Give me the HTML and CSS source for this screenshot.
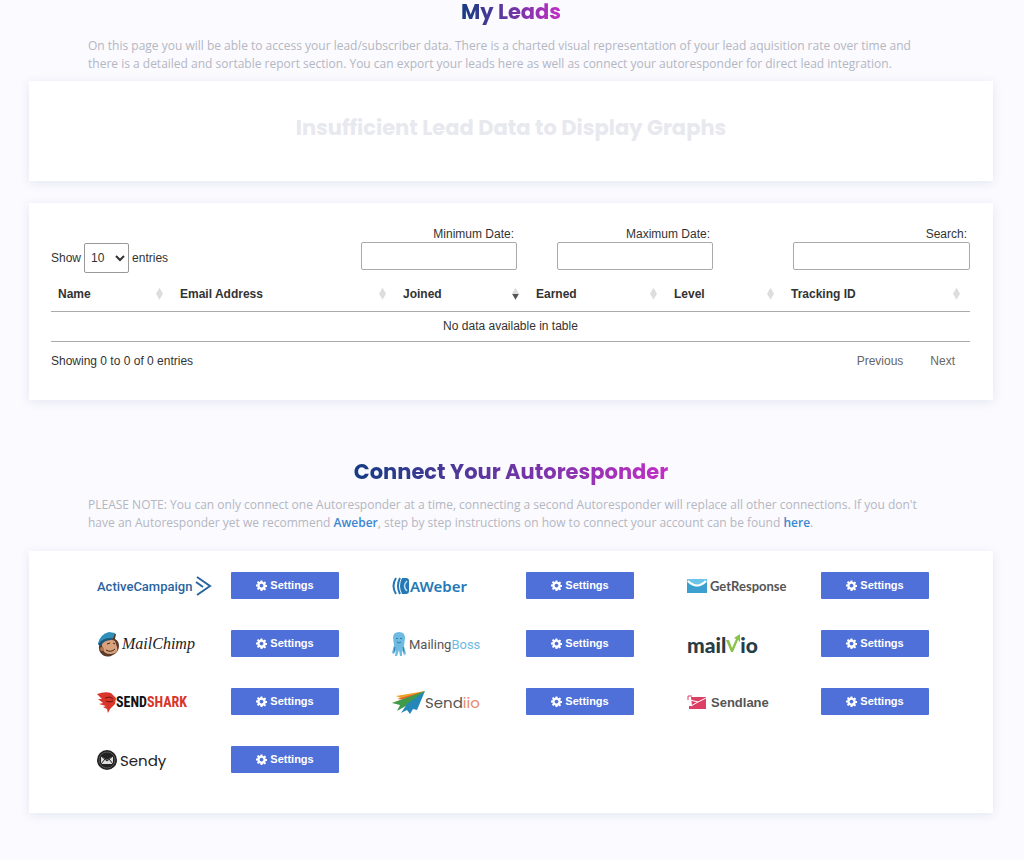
FILE: index.html
```html
<!DOCTYPE html>
<html lang="en">
<head>
    <meta charset="UTF-8">
    <title>My Leads</title>
    <link rel="stylesheet" href="styles.css">
</head>
<body>
<svg class="sprite" aria-hidden="true">
    <symbol id="gear" viewBox="0 0 24 24">
        <path fill-rule="evenodd" d="M10 1h4l.6 3.2 2 .9 2.7-1.900 2.800 2.800-1.900 2.700.900 2L24 11v4l-3 .3-.9 2 1.9 2.7-2.8 2.8-2.7-1.9-2 .9L14 24h-4l-.5-3.2-2-.9-2.7 1.9L2 19l1.9-2.7-.9-2L0 14v-4l3-.3.9-2L2 5l2.8-2.8 2.7 1.9 2-.9zM12 8a4.2 4.2 0 1 0 .01 0z"/>
    </symbol>
</svg>
<main class="page">
    <section class="intro">
        <h1 class="title"><span class="gradient">My Leads</span></h1>
        <p class="text">On this page you will be able to access your lead/subscriber data. There is a charted visual representation of your lead aquisition rate over time and there is a detailed and sortable report section. You can export your leads here as well as connect your autoresponder for direct lead integration.</p>
    </section>

    <section class="card graph">
        <h2 class="title muted">Insufficient Lead Data to Display Graphs</h2>
    </section>

    <section class="card report">
        <div class="controls">
            <div class="length">
                <label for="length">Show</label>
                <select id="length">
                    <option>10</option>
                    <option>25</option>
                    <option>50</option>
                    <option>100</option>
                </select>
                <span>entries</span>
            </div>
            <div class="field">
                <label for="min">Minimum Date:</label>
                <input type="text" id="min">
            </div>
            <div class="field">
                <label for="max">Maximum Date:</label>
                <input type="text" id="max">
            </div>
            <div class="field search">
                <label for="search">Search:</label>
                <input type="search" id="search">
            </div>
        </div>
        <table class="leads">
            <colgroup>
                <col class="c-name"><col class="c-email"><col class="c-joined">
                <col class="c-earned"><col class="c-level"><col>
            </colgroup>
            <thead>
                <tr>
                    <th><div class="sort">Name</div></th>
                    <th><div class="sort">Email Address</div></th>
                    <th aria-sort="descending"><div class="sort desc">Joined</div></th>
                    <th><div class="sort">Earned</div></th>
                    <th><div class="sort">Level</div></th>
                    <th><div class="sort">Tracking ID</div></th>
                </tr>
            </thead>
            <tbody>
                <tr><td colspan="6">No data available in table</td></tr>
            </tbody>
        </table>
        <div class="table-foot">
            <span>Showing 0 to 0 of 0 entries</span>
            <nav class="pager">
                <a href="#">Previous</a>
                <a href="#">Next</a>
            </nav>
        </div>
    </section>

    <section class="intro connect">
        <h2 class="title"><span class="gradient">Connect Your Autoresponder</span></h2>
        <p class="text">PLEASE NOTE: You can only connect one Autoresponder at a time, connecting a second Autoresponder will replace all other connections. If you don't have an Autoresponder yet we recommend <a href="#">Aweber</a>, step by step instructions on how to connect your account can be found <a href="#">here</a>.</p>
    </section>

    <section class="card services">
        <div class="service">
            <div class="logo activecampaign">
                <span>ActiveCampaign</span>
                <svg width="17" height="20" viewBox="0 0 17 20" fill="none" stroke="#2a64a0" stroke-width="2"><path d="M2 1l13 9L2 19M1 6l7 5"/></svg>
            </div>
            <button class="btn"><svg class="gear"><use href="#gear"/></svg>Settings</button>
        </div>
        <div class="service">
            <div class="logo aweber">
                <svg width="17" height="18" viewBox="0 0 17 18"><path fill="#2378b5" d="M10 1h4q3 0 3 3v10q0 3-3 3h-4Q6 9 10 1z"/><path fill="none" stroke="#2378b5" stroke-width="2" d="M4 1q-5 8 0 16M8 1Q4 9 8 17"/><path fill="none" stroke="#bfe0f2" stroke-width="1.500" d="M15 4q-5 5 0 10"/></svg>
                <span>AWeber</span>
            </div>
            <button class="btn"><svg class="gear"><use href="#gear"/></svg>Settings</button>
        </div>
        <div class="service">
            <div class="logo getresponse">
                <svg width="20" height="14" viewBox="0 0 20 14"><path fill="#3ba0cf" d="M0 0h20v14H0z"/><path fill="#6cc4e6" d="M0 0h20v3q-10 9-20 0z"/><path fill="none" stroke="#fff" stroke-width="2" d="M1 2q9 9 18 0"/></svg>
                <span>GetResponse</span>
            </div>
            <button class="btn"><svg class="gear"><use href="#gear"/></svg>Settings</button>
        </div>
        <div class="service">
            <div class="logo mailchimp">
                <svg width="23" height="25" viewBox="0 0 23 25"><path fill="#5b3a2b" d="M5 6Q0 14 3 20q4 6 11 4 8-3 8-10 0-5-4-7l1-5-4-1z"/><path fill="#d9a27d" d="M8 9q5-3 10 0 1 3 2 6 2 6-6 7-8 0-8-6-3-4 2-7z"/><path fill="#2f8fb8" d="M1 12Q3 2 12 0l6 1q-1 4-3 6-8 0-12 7z"/><path fill="#1e5578" d="M1 12q6-7 14-6l-1 2Q7 8 3 14z"/><path fill="none" stroke="#3b241b" d="M10 12l3-1M16 11l2 1M9 18q5 3 9-1"/><circle fill="#b57650" cx="5" cy="17" r="2"/></svg>
                <span>MailChimp</span>
            </div>
            <button class="btn"><svg class="gear"><use href="#gear"/></svg>Settings</button>
        </div>
        <div class="service">
            <div class="logo mailingboss">
                <svg width="14" height="24" viewBox="0 0 14 24"><path fill="#6dbbe0" d="M1 6q0-6 6-6t6 6l-1 8 2 8-2 1-2-5v6H8l-1-6-2 6H3l1-6-2 4-2-1 2-8z"/><path fill="none" stroke="#2f7da8" d="M4 7q1-2 2 0M8 7q1-2 2 0M5 10q2 2 4 0M3 15l-1 5M11 15l1 5"/></svg>
                <span>Mailing<span class="blue">Boss</span></span>
            </div>
            <button class="btn"><svg class="gear"><use href="#gear"/></svg>Settings</button>
        </div>
        <div class="service">
            <div class="logo mailvio">
                <span>mail</span>
                <svg width="14" height="20" viewBox="0 0 14 20"><path fill="#8bc34a" d="M0 6h3l3 8 4-9-2-1 6-4v8l-2-2-5 12H5z"/></svg>
                <span>io</span>
            </div>
            <button class="btn"><svg class="gear"><use href="#gear"/></svg>Settings</button>
        </div>
        <div class="service">
            <div class="logo sendshark">
                <svg width="19" height="21" viewBox="0 0 19 21"><path fill="#d9352a" d="M0 2Q8-1 14 1l5 5-1 6-5 5-2 4-1-4-4-2 3-1-7-2 4-1-5-4 4 0z"/><path fill="none" stroke="#6d1712" d="M8 6l5-1 3 2M9 9l3 1 4-1"/></svg>
                <span>SEND<span class="red">SHARK</span></span>
            </div>
            <button class="btn"><svg class="gear"><use href="#gear"/></svg>Settings</button>
        </div>
        <div class="service">
            <div class="logo sendiio">
                <svg width="33" height="23" viewBox="0 0 33 23"><path fill="#f0a32b" d="M33 0L4 5l7 3-11 4 16-1z"/><path fill="#e2682c" d="M33 0L5 8l9 1z"/><path fill="#3f9b4b" d="M33 0L0 12l8 2-3 6 14-8z"/><path fill="#2586b8" d="M33 0L15 13l-6 9 6-3 3 4 3-5 4 1z"/></svg>
                <span>Send<span class="orange">iio</span></span>
            </div>
            <button class="btn"><svg class="gear"><use href="#gear"/></svg>Settings</button>
        </div>
        <div class="service">
            <div class="logo sendlane">
                <svg width="19" height="14" viewBox="0 0 19 14"><path fill="#dc3f63" d="M4 2h15v12H2v-3h3z"/><path fill="none" stroke="#fff" d="M3 5l8 2 8-4M4 11l7-4"/><path fill="none" stroke="#dc3f63" d="M1 5V1h4"/></svg>
                <span>Sendlane</span>
            </div>
            <button class="btn"><svg class="gear"><use href="#gear"/></svg>Settings</button>
        </div>
        <div class="service">
            <div class="logo sendy">
                <svg width="20" height="20" viewBox="0 0 20 20"><circle cx="10" cy="10" r="10" fill="#222"/><circle cx="10" cy="10" r="8" fill="none" stroke="#555"/><path fill="#ddd" d="M4 6l6 4 6-4v8H4z"/><path fill="none" stroke="#222" d="M4 14l4-5M16 14l-4-5M4 6l6 5 6-5"/></svg>
                <span>Sendy</span>
            </div>
            <button class="btn"><svg class="gear"><use href="#gear"/></svg>Settings</button>
        </div>
    </section>
</main>
</body>
</html>
```
FILE: styles.css
```css
*{
    box-sizing: border-box;
}
body{
    margin: 0;
    background-color: #fafaff;
    color: #333;
    font-family: "Liberation Sans", Arial, sans-serif;
    font-size: 12px;
}
h1, h2, p{
    margin: 0;
}
.sprite{
    display: none;
}
.page{
    padding: 0 31px 47px 29px;
}
.intro{
    padding: 0 59px 8px;
}
.title{
    font-family: Poppins, Inter, sans-serif;
    font-size: 21px;
    font-weight: 700;
    line-height: 24px;
    text-align: center;
}
.gradient{
    background: linear-gradient(to right, #143c83, #c22fc4);
    -webkit-background-clip: text;
    background-clip: text;
    color: transparent;
}
.muted{
    color: #e8e8ef;
}
.text{
    margin-top: 13px;
    color: #b4b7bf;
    font-family: "Open Sans", sans-serif;
    font-size: 12px;
    line-height: 18px;
}
.text a{
    color: #3c87cf;
    font-weight: 600;
    text-decoration: none;
}
.card{
    background-color: #fff;
    box-shadow: 0 2px 10px rgba(60, 60, 120, 0.1);
}
.graph{
    padding: 35px 22px 41px;
}
.report{
    margin-top: 22px;
    padding: 24px 23px 31px 22px;
}
.controls{
    display: flex;
    align-items: flex-start;
    gap: 40px;
}
.length{
    display: flex;
    align-items: center;
    gap: 3px;
    margin-right: auto;
    padding-top: 16px;
}
.length select{
    width: 45px;
    height: 30px;
    padding: 0 2px;
    border: 1px solid #999;
    border-radius: 2px;
    background-color: #fff;
    color: #333;
    font: inherit;
}
.field{
    width: 156px;
}
.field label{
    display: block;
    padding-right: 3px;
    line-height: 15px;
    text-align: right;
}
.field input{
    display: block;
    width: 100%;
    height: 28px;
    border: 1px solid #aaa;
    border-radius: 2px;
    background-color: #fff;
}
.search{
    width: 177px;
    margin-left: 40px;
}
.leads{
    width: 100%;
    margin-top: 4px;
    border-collapse: collapse;
    border-bottom: 1px solid #aaa;
    table-layout: fixed;
}
.c-name{ width: 122px; }
.c-email{ width: 223px; }
.c-joined{ width: 133px; }
.c-earned{ width: 138px; }
.c-level{ width: 117px; }
.leads th{
    height: 34px;
    padding: 0 7px;
    border-bottom: 1px solid #aaa;
    text-align: left;
}
.leads td{
    height: 30px;
    padding: 0;
    text-align: center;
}
.sort{
    display: flex;
    align-items: center;
    justify-content: space-between;
}
.sort::after{
    content: "";
    width: 7px;
    height: 12px;
    margin-right: 3px;
    background-color: #ddd;
    clip-path: polygon(50% 0, 100% 50%, 50% 100%, 0 50%);
}
.desc::after{
    background: linear-gradient(#ddd 50%, #555 50%);
}
.table-foot{
    display: flex;
    justify-content: space-between;
    padding-top: 11px;
    line-height: 16px;
}
.pager{
    display: flex;
    gap: 27px;
    padding-right: 15px;
}
.pager a{
    color: #666;
    text-decoration: none;
}
.connect{
    padding-top: 60px;
    padding-bottom: 19px;
}
.connect .text{
    margin-top: 12px;
}
.services{
    display: grid;
    grid-template-columns: repeat(3, 1fr);
    row-gap: 31px;
    padding: 21px 41px 40px 38px;
}
.service{
    display: flex;
    align-items: center;
    padding-left: 30px;
}
.logo{
    display: flex;
    align-items: center;
    gap: 3px;
    width: 134px;
    height: 27px;
    padding-top: 2px;
    white-space: nowrap;
}
.logo svg{
    flex: none;
}
.btn{
    display: flex;
    align-items: center;
    justify-content: center;
    gap: 3px;
    width: 108px;
    height: 27px;
    padding: 0;
    border: 0;
    border-radius: 1px;
    background-color: #4f70d8;
    color: #fff;
    font-family: inherit;
    font-size: 11px;
    font-weight: 700;
}
.gear{
    width: 11px;
    height: 11px;
    fill: #fff;
}
.activecampaign{
    color: #2a64a0;
    font-family: Roboto, sans-serif;
    font-size: 13px;
    font-weight: 500;
}
.aweber{
    gap: 1px;
    color: #2378b5;
    font-family: "Noto Sans", sans-serif;
    font-size: 15px;
    font-weight: 600;
}
.getresponse{
    color: #555;
    font-family: Lato, sans-serif;
    font-size: 13px;
    font-weight: 700;
}
.mailchimp{
    gap: 2px;
    color: #222;
    font-family: "Liberation Serif", serif;
    font-size: 16px;
    font-style: italic;
}
.mailingboss{
    color: #555;
    font-family: Roboto, sans-serif;
    font-size: 13px;
}
.blue{
    color: #6dbbe0;
}
.mailvio{
    gap: 0;
    color: #273d47;
    font-family: Lato, sans-serif;
    font-size: 21px;
    font-weight: 900;
}
.sendshark{
    gap: 0;
    color: #111;
    font-family: "Liberation Sans Narrow", "Roboto Condensed", sans-serif;
    font-size: 14px;
    font-weight: 700;
}
.red{
    color: #d9352a;
}
.sendiio{
    gap: 0;
    color: #555;
    font-family: Poppins, Lato, sans-serif;
    font-size: 15px;
}
.orange{
    color: #e58a6b;
}
.sendlane{
    gap: 5px;
    color: #555;
    font-size: 13px;
    font-weight: 700;
}
.sendy{
    color: #222;
    font-family: Poppins, Lato, sans-serif;
    font-size: 15px;
}
```
